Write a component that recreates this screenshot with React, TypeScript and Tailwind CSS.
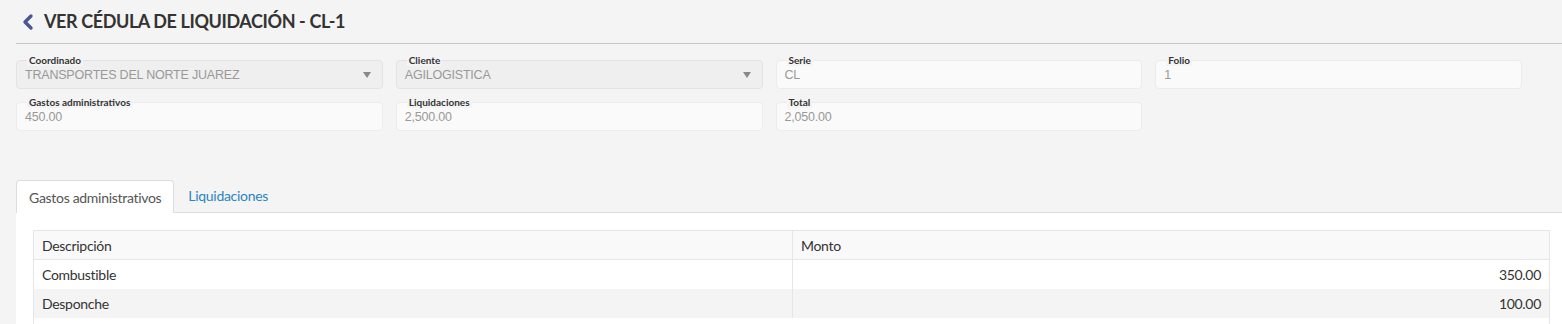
import { ChevronLeft } from "lucide-react";

const ui = "font-['Lato','Noto_Sans',sans-serif]";

type FieldProps = {
  label: string;
  value: string;
  select?: boolean;
};

function Field({ label, value, select }: FieldProps) {
  return (
    <div
      className={`relative h-[29px] rounded-[4px] border ${
        select ? "border-[#e3e3e3] bg-[#efefef]" : "border-[#ececec] bg-[#fafafa]"
      }`}
    >
      <span className="absolute left-[10px] top-[-6px] bg-[#f4f4f4] px-[2px] text-[10px] leading-[11px] font-bold text-[#333]">
        {label}
      </span>
      <div className="flex h-full items-center justify-between pl-[8px] pr-[10px] pt-[1px]">
        <span className="font-['Liberation_Sans',sans-serif] text-[12.5px] tracking-[-0.2px] text-[#999]">{value}</span>
        {select && (
          <svg width="8" height="6" viewBox="0 0 8 6" className="mr-[1px]">
            <path d="M0 0h8L4 6z" fill="#888" />
          </svg>
        )}
      </div>
    </div>
  );
}

const rows = [
  { desc: "Combustible", monto: "350.00" },
  { desc: "Desponche", monto: "100.00" },
];

export default function App() {
  return (
    <div className={`h-[324px] w-[1562px] overflow-hidden bg-[#f4f4f4] ${ui}`}>
      {/* Header */}
      <div className="ml-[16px] flex h-[44px] items-center border-b border-[#c6c6c6]">
        <ChevronLeft size={24} strokeWidth={3.4} className="text-[#4a5890]" />
        <h1 className="ml-[4px] text-[18px] font-bold tracking-[-0.4px] text-[#333]">
          VER CÉDULA DE LIQUIDACIÓN - CL-1
        </h1>
      </div>

      {/* Form */}
      <div className="grid grid-cols-4 gap-x-[13px] gap-y-[13px] pl-[16px] pr-[40px] pt-[16px]">
        <Field label="Coordinado" value="TRANSPORTES DEL NORTE JUAREZ" select />
        <Field label="Cliente" value="AGILOGISTICA" select />
        <Field label="Serie" value="CL" />
        <Field label="Folio" value="1" />
        <Field label="Gastos administrativos" value="450.00" />
        <Field label="Liquidaciones" value="2,500.00" />
        <Field label="Total" value="2,050.00" />
      </div>

      {/* Tabs */}
      <div className="ml-[16px] mt-[49px] text-[14px] tracking-[-0.3px]">
        <div className="flex h-[33px] items-end border-b border-[#ddd]">
          <div className="-mb-px flex h-[33px] items-center rounded-t-[4px] border border-b-0 border-[#ddd] bg-white px-[12px] text-[#555]">
            Gastos administrativos
          </div>
          <div className="flex h-[33px] items-center px-[14px] text-[#2a85c1]">Liquidaciones</div>
        </div>
        <div className="bg-white pl-[17px] pr-[12px] pt-[17px]">
          <table className="w-full border-collapse border border-[#e6e6e6] text-[#333]">
            <thead>
              <tr className="h-[29px] bg-[#f9f9f9]">
                <th className="w-[759px] border border-[#e6e6e6] px-[8px] text-left font-normal">Descripción</th>
                <th className="border border-[#e6e6e6] px-[8px] text-left font-normal">Monto</th>
              </tr>
            </thead>
            <tbody>
              {rows.map((r, i) => (
                <tr key={r.desc} className={`h-[29px] ${i % 2 === 1 ? "bg-[#f4f4f4]" : "bg-white"}`}>
                  <td className="border-x border-[#e6e6e6] px-[8px]">{r.desc}</td>
                  <td className="border-x border-[#e6e6e6] px-[8px] text-right">{r.monto}</td>
                </tr>
              ))}
              <tr className="h-[29px] bg-white">
                <td colSpan={2} className="border-x border-[#e6e6e6]" />
              </tr>
            </tbody>
          </table>
        </div>
      </div>
    </div>
  );
}
